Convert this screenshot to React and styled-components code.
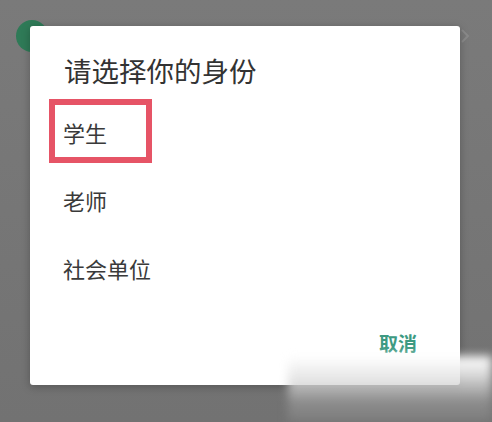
import React from "react";
import styled, { createGlobalStyle } from "styled-components";

const Global = createGlobalStyle`
  html, body { margin: 0; padding: 0; background: #777; }
  body { font-family: "Noto Sans CJK SC", "Noto Sans", sans-serif; }
`;

const Page = styled.div`
  position: relative;
  width: 492px;
  height: 422px;
  overflow: hidden;
  background: linear-gradient(#7a7a7a, #727272);
  display: flex;
  align-items: flex-start;
  padding: 26px 0 0 30px;
  box-sizing: border-box;
`;

const Avatar = styled.div`
  position: absolute;
  left: 16px;
  top: 20px;
  width: 32px;
  height: 32px;
  border-radius: 50%;
  background: #2f7a57;
`;

const Chevron = styled.svg`
  position: absolute;
  left: 460px;
  top: 28px;
`;

const Dialog = styled.div`
  position: relative;
  width: 430px;
  height: 359px;
  background: #fff;
  border-radius: 3px;
  box-shadow: 0 2px 8px rgba(0, 0, 0, 0.25);
  display: flex;
  flex-direction: column;
  box-sizing: border-box;
  padding-top: 26px;
`;

const Title = styled.h1`
  margin: 0 0 10px;
  padding-left: 34px;
  font-size: 27.5px;
  line-height: 36px;
  font-weight: 400;
  color: #333;
`;

const Row = styled.div`
  height: 68px;
  display: flex;
  align-items: center;
  padding-left: 33px;
`;

const Label = styled.span`
  position: relative;
  font-size: 22px;
  line-height: 22px;
  color: #3a3a3a;

  ${(p) =>
    p.$highlight &&
    `
    &::after {
      content: "";
      position: absolute;
      left: -14px;
      right: -45px;
      top: -22px;
      bottom: -20px;
      border: 6px solid #e65466;
    }
  `}
`;

const Footer = styled.div`
  flex: 1;
  display: flex;
  align-items: center;
  justify-content: flex-end;
  padding-right: 43px;
  padding-bottom: 2px;
`;

const Cancel = styled.button`
  border: none;
  background: none;
  padding: 0;
  font-family: inherit;
  font-size: 19px;
  font-weight: 700;
  color: #3d9a82;
`;

const Watermark = styled.div`
  position: absolute;
  left: 288px;
  top: 356px;
  width: 204px;
  height: 66px;
  background: linear-gradient(
    to bottom,
    rgba(255, 255, 255, 1) 0%,
    rgba(235, 235, 235, 0.9) 25%,
    rgba(160, 160, 160, 0.55) 70%,
    rgba(140, 140, 140, 0.4) 100%
  );
  filter: blur(5px);
`;

const roles = ["学生", "老师", "社会单位"];

export default function App() {
  return (
    <>
      <Global />
      <Page>
        <Avatar />
        <Chevron width="10" height="16" viewBox="0 0 10 16">
          <path d="M2 2l6 6-6 6" fill="none" stroke="#8a8a8a" strokeWidth="2" />
        </Chevron>
        <Dialog>
          <Title>请选择你的身份</Title>
          {roles.map((r, i) => (
            <Row key={r}>
              <Label $highlight={i === 0}>{r}</Label>
            </Row>
          ))}
          <Footer>
            <Cancel>取消</Cancel>
          </Footer>
        </Dialog>
        <Watermark />
      </Page>
    </>
  );
}
